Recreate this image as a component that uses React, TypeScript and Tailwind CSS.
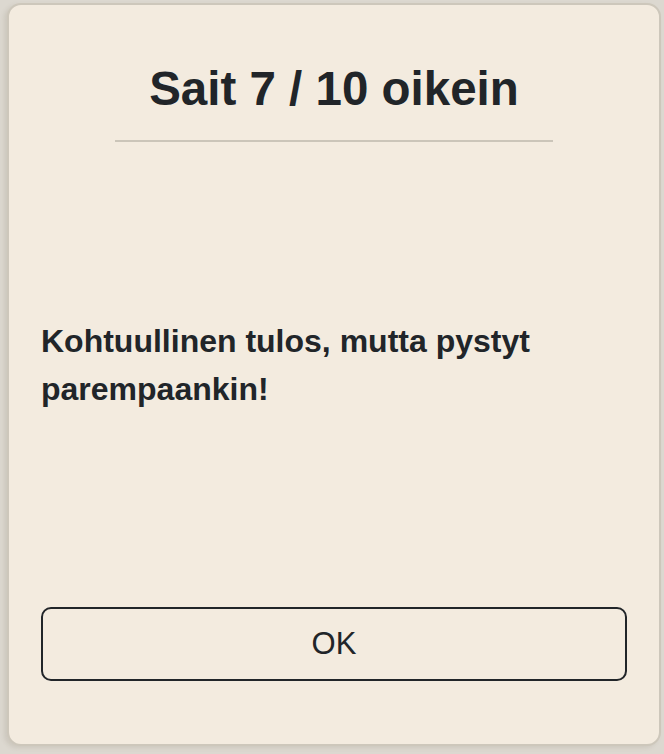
export default function App() {
  return (
    <div className="min-h-screen bg-[#dcd8d0] pl-[7px] pt-[3px] font-['Liberation_Sans',Arial,sans-serif] text-[#212529]">
      <div className="flex h-[743px] w-[654px] flex-col rounded-[14px] border-2 border-[#cdc7bb] bg-[#f3ebdf] px-[32px] pt-[55px] pb-[63px] shadow-[-3px_2px_4px_rgba(120,110,90,0.15)]">
        <h1 className="text-center text-[47.5px] font-bold leading-[1.2]">Sait 7 / 10 oikein</h1>
        <div className="mx-auto mt-[23px] h-[2px] w-[438px] bg-[#cbc5b9]" />

        <p className="mt-[175px] text-[32px] font-bold leading-[48px]">
          Kohtuullinen tulos, mutta pystyt parempaankin!
        </p>

        <div className="flex-1" />

        <button
          type="button"
          className="flex h-[74px] w-full items-center justify-center rounded-[10px] border-2 border-[#212529] text-[31px] text-[#212529]"
        >
          OK
        </button>
      </div>
    </div>
  )
}
